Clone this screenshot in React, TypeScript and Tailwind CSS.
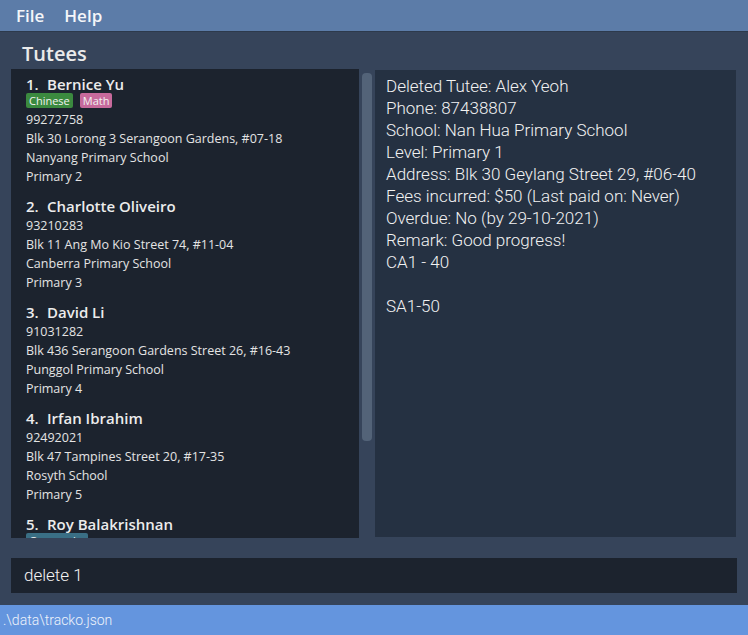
import React from 'react';

interface Tag {
  label: string;
  color: string;
}

interface Tutee {
  name: string;
  tags: Tag[];
  phone: string;
  address: string;
  school: string;
  level: string;
}

const tutees: Tutee[] = [
  {
    name: 'Bernice Yu',
    tags: [
      { label: 'Chinese', color: 'bg-[#3b8a3f]' },
      { label: 'Math', color: 'bg-[#c76a9c]' },
    ],
    phone: '99272758',
    address: 'Blk 30 Lorong 3 Serangoon Gardens, #07-18',
    school: 'Nanyang Primary School',
    level: 'Primary 2',
  },
  {
    name: 'Charlotte Oliveiro',
    tags: [],
    phone: '93210283',
    address: 'Blk 11 Ang Mo Kio Street 74, #11-04',
    school: 'Canberra Primary School',
    level: 'Primary 3',
  },
  {
    name: 'David Li',
    tags: [],
    phone: '91031282',
    address: 'Blk 436 Serangoon Gardens Street 26, #16-43',
    school: 'Punggol Primary School',
    level: 'Primary 4',
  },
  {
    name: 'Irfan Ibrahim',
    tags: [],
    phone: '92492021',
    address: 'Blk 47 Tampines Street 20, #17-35',
    school: 'Rosyth School',
    level: 'Primary 5',
  },
  {
    name: 'Roy Balakrishnan',
    tags: [{ label: 'Geography', color: 'bg-[#3a6f85]' }],
    phone: '92624417',
    address: 'Blk 45 Aljunied Street 85, #11-31',
    school: 'Henry Park Primary School',
    level: 'Primary 6',
  },
];

const result = [
  'Deleted Tutee: Alex Yeoh',
  'Phone: 87438807',
  'School: Nan Hua Primary School',
  'Level: Primary 1',
  'Address: Blk 30 Geylang Street 29, #06-40',
  'Fees incurred: $50 (Last paid on: Never)',
  'Overdue: No (by 29-10-2021)',
  'Remark: Good progress!',
  'CA1 - 40',
  '',
  'SA1-50',
];

function TuteeCard({ t, index }: { t: Tutee; index: number }) {
  return (
    <div className="pl-[15px] pt-[4px] pb-[6px]">
      <div className="text-[15px] font-semibold leading-[20px] text-[#ececec] flex">
        <span className="w-[21px]">{index}.</span>
        <span>{t.name}</span>
      </div>
      {t.tags.length > 0 && (
        <div className="flex gap-[7px] mt-[-1px] mb-[2px]">
          {t.tags.map((tag) => (
            <span
              key={tag.label}
              className={`${tag.color} text-[11px] leading-[15px] px-[3px] rounded-[2px] text-[#f2f2f2]`}
            >
              {tag.label}
            </span>
          ))}
        </div>
      )}
      <div className="text-[12.5px] leading-[19px] text-[#e4e4e4]">
        <div>{t.phone}</div>
        <div>{t.address}</div>
        <div>{t.school}</div>
        <div>{t.level}</div>
      </div>
    </div>
  );
}

export default function App() {
  return (
    <div
      className="w-[748px] h-[635px] flex flex-col bg-[#36445a] overflow-hidden"
      style={{ fontFamily: '"Open Sans", sans-serif' }}
    >
      <div className="h-[32px] shrink-0 bg-[#5c7ca8] border-b border-[#2d3a4c] flex items-center gap-[20px] px-[16px] text-[17px] font-semibold text-[#f4f6f9]">
        <span>File</span>
        <span>Help</span>
      </div>

      <div className="flex-1 flex flex-col pl-[11px] pr-[11px]">
        <div className="h-[37px] pl-[11px] pt-[9px] text-[20px] leading-[26px] font-semibold text-[#eaeaea]">
          Tutees
        </div>

        <div className="flex h-[469px]">
          <div className="w-[348px] bg-[#1c232e] overflow-hidden pt-[1px]">
            {tutees.map((t, i) => (
              <TuteeCard key={t.name} t={t} index={i + 1} />
            ))}
          </div>
          <div className="w-[16px] flex justify-center pt-[4px]">
            <div className="w-[10px] h-[368px] rounded-[4px] bg-[#536378]" />
          </div>
          <div
            className="w-[361px] my-[1px] bg-[#253142] px-[11px] pt-[5px] text-[17px] leading-[22px] font-light text-[#f2f2f2]"
            style={{ fontFamily: 'Roboto, sans-serif' }}
          >
            {result.map((line, i) => (
              <div key={i} className="h-[22px]">
                {line}
              </div>
            ))}
          </div>
        </div>

        <div
          className="mt-[20px] h-[35px] bg-[#1c232e] flex items-center pl-[13px] text-[17px] font-light text-[#f4f4f4]"
          style={{ fontFamily: 'Roboto, sans-serif' }}
        >
          delete 1
        </div>
      </div>

      <div
        className="h-[30px] shrink-0 mt-[12px] bg-[#6495de] flex items-center pl-[3px] text-[14px] font-light text-[#eef3fb]"
        style={{ fontFamily: 'Roboto, sans-serif' }}
      >
        .\data\tracko.json
      </div>
    </div>
  );
}
